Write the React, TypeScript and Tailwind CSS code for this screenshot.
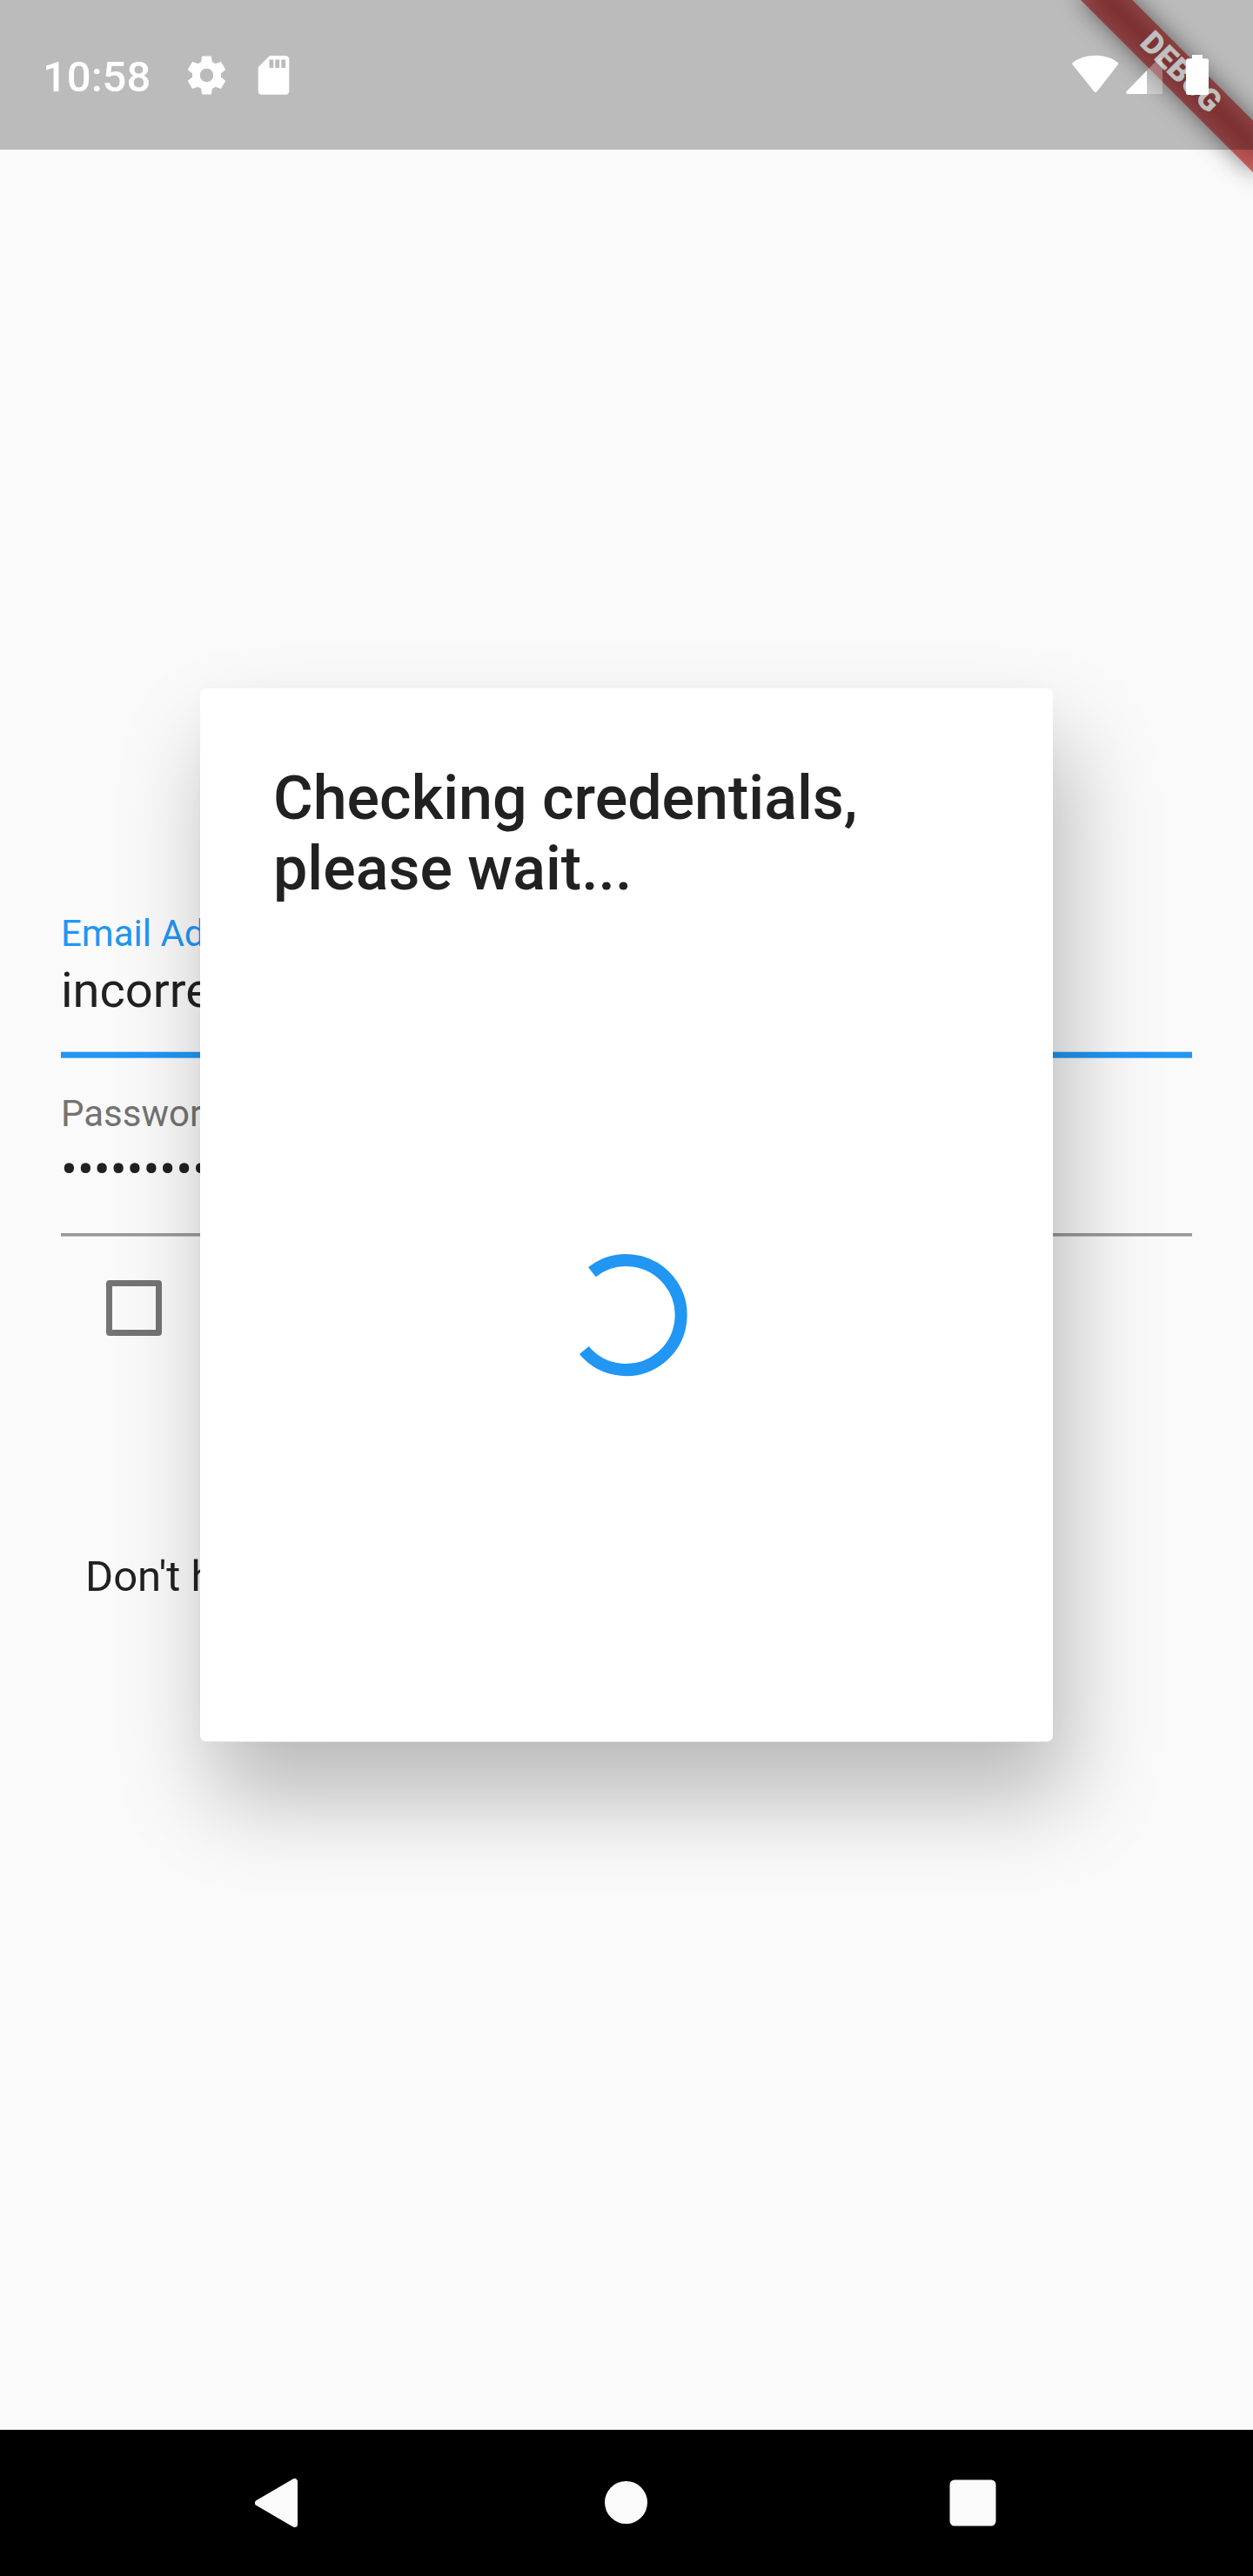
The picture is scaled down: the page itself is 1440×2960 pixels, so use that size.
import React from "react";

function StatusBar() {
  return (
    <header className="absolute inset-x-0 top-0 flex h-[172px] bg-black/25 pl-[49px] text-white">
      <span className="mt-[60px] w-[162px] text-[49px] leading-[57px] font-medium">10:58</span>
      <svg className="mt-[60px] h-[53px] w-[53px]" viewBox="0 0 24 24" fill="currentColor">
        <path d="M19.43 12.98c.04-.32.07-.64.07-.98s-.03-.66-.07-.98l2.11-1.65c.19-.15.24-.42.12-.64l-2-3.46c-.12-.22-.39-.3-.61-.22l-2.49 1c-.52-.4-1.08-.73-1.69-.98l-.38-2.65C14.46 2.18 14.25 2 14 2h-4c-.25 0-.46.18-.49.42l-.38 2.65c-.61.25-1.17.59-1.69.98l-2.49-1c-.23-.09-.49 0-.61.22l-2 3.46c-.13.22-.07.49.12.64l2.11 1.65c-.04.32-.07.65-.07.98s.03.66.07.98l-2.11 1.65c-.19.15-.24.42-.12.64l2 3.46c.12.22.39.3.61.22l2.49-1c.52.4 1.08.73 1.69.98l.38 2.65c.03.24.24.42.49.42h4c.25 0 .46-.18.49-.42l.38-2.65c.61-.25 1.17-.59 1.69-.98l2.49 1c.23.09.49 0 .61-.22l2-3.46c.12-.22.07-.49-.12-.64l-2.11-1.65zM12 15.5c-1.93 0-3.5-1.57-3.5-3.5s1.57-3.5 3.5-3.5 3.5 1.57 3.5 3.5-1.57 3.5-3.5 3.5z" />
      </svg>
      <svg className="mt-[64px] ml-[32px] h-[45px] w-[37px]" viewBox="0 0 37 45" fill="currentColor" fillRule="evenodd">
        <path d="M14 0H31.8Q36.3 0 36.3 4.5V40.2Q36.3 44.7 31.8 44.7H5.2Q.7 44.7 .7 40.2V13.3ZM13.4 4.6V14h4.9V4.6ZM20.3 4.6V14h4.9V4.6ZM27.3 4.6V14h4.9V4.6Z" />
      </svg>
      <div className="mt-[63px] mr-[51px] ml-auto flex items-start">
        <svg className="h-[46px] w-[54px]" viewBox="0 0 54 46" fill="currentColor">
          <path d="M27 .7C37.5 .7 46 3.6 52.3 8.4Q54 9.8 52.6 11.6L28.8 42.1Q27 44.2 25.2 42.1L.9 11.6Q-.5 9.8 1.4 8.4C8 3.6 16.5 .7 27 .7Z" />
        </svg>
        <svg className="ml-[8px] h-[46px] w-[42px]" viewBox="0 0 42 46" fill="currentColor">
          <path d="M24 18V45H1.8Q-.6 44.6 .7 42Z" />
          <path d="M24 18L38.5 3.5Q42 1.5 42 5V43.5Q42 45 40.5 45H24Z" opacity=".3" />
        </svg>
        <svg className="ml-[27px] h-[46px] w-[26px]" viewBox="0 0 26 46" fill="currentColor">
          <path d="M7 0H19V4.3H23.5Q26 4.3 26 6.8V43.5Q26 46 23.5 46H2.5Q0 46 0 43.5V6.8Q0 4.3 2.5 4.3H7Z" />
        </svg>
      </div>
    </header>
  );
}

function DebugBanner() {
  return (
    <div className="absolute top-0 right-0 h-0 w-0">
      <div className="absolute top-0 left-0 h-0 w-0 rotate-45">
        <div className="absolute top-[98px] left-[-140px] h-[42px] w-[280px] bg-black/50 blur-[14px]" />
        <div className="absolute top-[98px] left-[-140px] h-[42px] w-[280px] bg-[#b71c1c]/63 text-center text-[35.7px] leading-[39px] font-black text-white">
          DEBUG
        </div>
      </div>
    </div>
  );
}

function LoginForm() {
  return (
    <main className="flex-1 px-[70px] pt-[1048px] whitespace-nowrap">
      <label className="block text-[42px] leading-[49px] text-[#2196f3]">Email Address</label>
      <div className="mt-[8px] h-[66px] text-[56px] leading-[66px]">incorrect</div>
      <div className="mt-[37px] h-[8px] border-y border-t-[#b9dcf9] border-b-[#62b5f6] bg-[#2196f3]" />
      <label className="mt-[39px] block text-[42px] leading-[49px] text-[#737373]">Password</label>
      <div className="mt-[7px] h-[66px] text-[56px] leading-[66px]">••••••••••</div>
      <div className="mt-[40px] h-[4px] border-b border-[#bcbcbc] bg-[#999999]" />
      <div className="mt-[50px] ml-[52px] h-[64px] w-[64px] rounded-[4px] border-[7px] border-[#747474]" />
      <p className="mt-[248px] ml-[28px] text-[49px] leading-[57px]">Don't have an account?</p>
    </main>
  );
}

function CheckingDialog() {
  return (
    <div className="absolute inset-x-0 top-0 flex justify-center pt-[790px]">
      <section
        role="dialog"
        className="flex h-[1212px] w-[980px] flex-col rounded-[7px] border-y border-t-[#f5f5f5] border-b-[#dcdcdc] bg-white px-[84px] pt-[85px] shadow-[15px_63px_106px_rgba(0,0,0,0.267),0_0_20px_rgba(0,0,0,0.02)]"
      >
        <h1 className="pt-px text-[70px] leading-[81px] font-medium">
          Checking credentials,
          <br />
          please wait...
        </h1>
        <svg className="mt-[402px] h-[142px] w-[140px] self-center" viewBox="0 0 140 142" fill="none">
          <path d="M30.4 20.8A63 63 0 1 1 21.3 110.5" stroke="#2196f3" strokeWidth="14" />
        </svg>
      </section>
    </div>
  );
}

function NavigationBar() {
  return (
    <nav className="flex h-[168px] bg-black pl-[293px] text-[#fafafa]">
      <svg className="mt-[56px] h-[56px] w-[49px]" viewBox="0 0 49 56" fill="currentColor" stroke="currentColor">
        <path d="M3.5 28L45.5 3.5V52.5Z" strokeWidth="7" strokeLinejoin="round" />
      </svg>
      <div className="mt-[59px] ml-[353px] h-[49px] w-[49px] rounded-full bg-current" />
      <svg className="mt-[57px] ml-[347px] h-[54px] w-[54px]" viewBox="0 0 54 54" fill="currentColor">
        <rect x=".5" y=".5" width="53" height="53" rx="5.5" />
      </svg>
    </nav>
  );
}

export default function App() {
  return (
    <div className="relative flex h-[2960px] w-[1440px] flex-col overflow-hidden bg-[#fafafa] font-['Roboto',sans-serif] text-[#212121]">
      <LoginForm />
      <NavigationBar />
      <CheckingDialog />
      <DebugBanner />
      <StatusBar />
    </div>
  );
}
